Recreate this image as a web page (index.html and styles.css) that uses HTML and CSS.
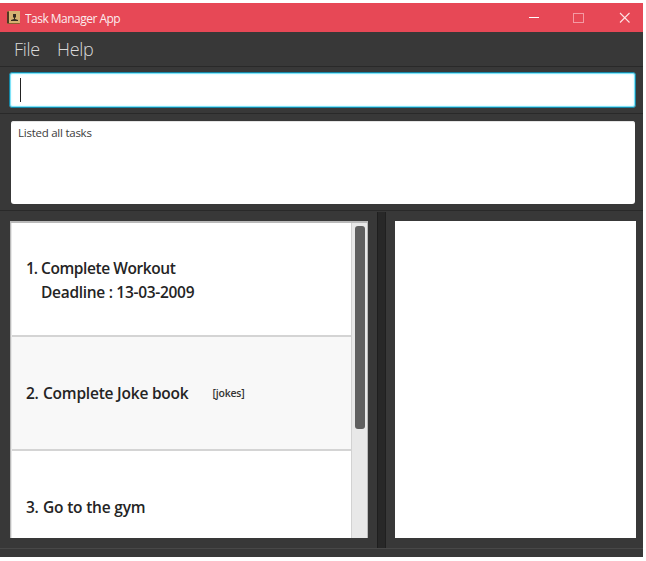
FILE: index.html
```html
<!DOCTYPE html>
<html lang="en">
<head>
<meta charset="utf-8">
<title>Task Manager App</title>
<link rel="stylesheet" href="styles.css">
</head>
<body>
<div class="window">
  <header class="titlebar">
    <svg class="app-icon" width="13" height="13" viewBox="0 0 13 13"><rect width="13" height="13" rx="1" fill="#88622f"/><rect x="2" width="11" height="12" fill="#d6b271"/><path d="M0 1h2v11H0z" fill="#503923"/><path d="M6 3h3v3l-1 1v1l3 1v1H4V9l3-1V7L6 6z" fill="#352c20"/></svg>
    <span class="title">Task Manager App</span>
    <svg class="controls" width="102" height="12" viewBox="0 0 102 12" fill="none"><path d="M0 5.500h10" stroke="#fff"/><rect x="44.500" y="1.500" width="10" height="9" stroke="#f49aa3"/><path d="M91 1l9.500 9.500M100.500 1L91 10.500" stroke="#fde3e5" stroke-width="1.100"/></svg>
  </header>
  <nav class="menu"><span class="file">File</span><span class="help">Help</span></nav>
  <section class="command"><div class="input"><i class="caret"></i></div></section>
  <section class="result"><div class="message"><span>Listed all tasks</span></div></section>
  <main class="split">
    <div class="list">
      <div class="rows">
        <article class="row"><span class="num">1.</span><div class="lines"><p class="workout">Complete Workout</p><p class="deadline">Deadline : 13-03-2009</p></div></article>
        <article class="row alt"><span class="num">2.</span><p class="joke">Complete Joke book</p><span class="tag">[jokes]</span></article>
        <article class="row"><span class="num">3.</span><p class="gym">Go to the gym</p></article>
      </div>
      <div class="track"><div class="thumb"></div></div>
    </div>
    <div class="divider"></div>
    <div class="browser"></div>
  </main>
  <footer class="status"></footer>
</div>
</body>
</html>
```
FILE: styles.css
```css
* { box-sizing: border-box; }
body { margin: 0; padding-top: 3px; background: #fff; font-family: "Open Sans", sans-serif; overflow: hidden; }
p { margin: 0; }
.window { width: 643px; height: 554px; background: #383838; display: flex; flex-direction: column; }
.titlebar { height: 29px; background: #e74856; display: flex; align-items: center; padding: 0 12px 0 7px; color: #fff; }
.title { margin-left: 5px; font-size: 12px; letter-spacing: -0.52px; flex: 1; line-height: 16px; padding-top: 3px; opacity: .9; }
.menu { height: 34px; padding: 0 14px; display: flex; color: #dadada; font-size: 18px; font-weight: 300; line-height: 34px; letter-spacing: -0.3px; }
.file { width: 43px; }
.command { height: 48px; border-top: 1px solid #292929; border-bottom: 1px solid #292929; padding: 5px 7px 6px 9px; }
.input { height: 36px; background: #fff; border: 1px solid #1686a5; border-radius: 3px; box-shadow: inset 0 0 0 1px #7fe3f8, inset 0 0 3px #8ee8fb; padding: 5px 10px; }
.caret { display: block; width: 1px; height: 24px; background: #222; }
.result { height: 97px; border-bottom: 1px solid #292929; padding: 7px 8px 6px 11px; }
.message { height: 83px; background: #fff; border-radius: 3px; box-shadow: inset 0 1px #e4e4e4; color: #3c3c3c; font-size: 11.5px; line-height: 16px; padding: 4px 7px; letter-spacing: -0.25px; }
.split { height: 337px; display: flex; padding-right: 7px; }
.list { width: 358px; height: 317px; margin: 10px 9px 0 10px; border: 1px solid #b9b9b9; border-top-width: 2px; border-bottom: 0; display: flex; background: #fff; overflow: hidden; }
.rows { flex: 1; overflow: hidden; border-left: 1px solid #e8e8e8; }
.row { height: 114px; border-bottom: 2px solid #d4d4d4; display: flex; align-items: center; padding: 0 0 1px 14px; font-size: 15.5px; font-weight: 600; line-height: 24px; color: #242424; white-space: nowrap; letter-spacing: -0.3px; }
.row:first-child { padding: 2px 0 0 14px; }
.alt { background: #f8f8f8; }
.num { width: 17px; letter-spacing: -0.3px; }
.row:first-child .num { width: 15px; align-self: flex-start; padding-top: 31px; letter-spacing: -1px; }
.workout { letter-spacing: -0.42px; }
.deadline { letter-spacing: -0.3px; }
.joke { letter-spacing: -0.22px; }
.gym { letter-spacing: -0.2px; }
.tag { margin-left: 24px; font-size: 10.5px; color: #333; padding-top: 1px; letter-spacing: -0.2px; }
.track { width: 16px; background: #e8e8e8; border-left: 1px solid #d2d2d2; padding: 3px 2px 0 3px; }
.thumb { width: 10px; height: 203px; background: #5f5f5f; border-radius: 3px; }
.divider { width: 9px; margin-top: 1px; background: #282828; border-left: 1px solid #1e1e1e; border-right: 1px solid #202020; }
.browser { width: 241px; height: 317px; margin: 10px 0 0 9px; background: #fff; }
.status { flex: 1; border-top: 1px solid #484848; }
```
